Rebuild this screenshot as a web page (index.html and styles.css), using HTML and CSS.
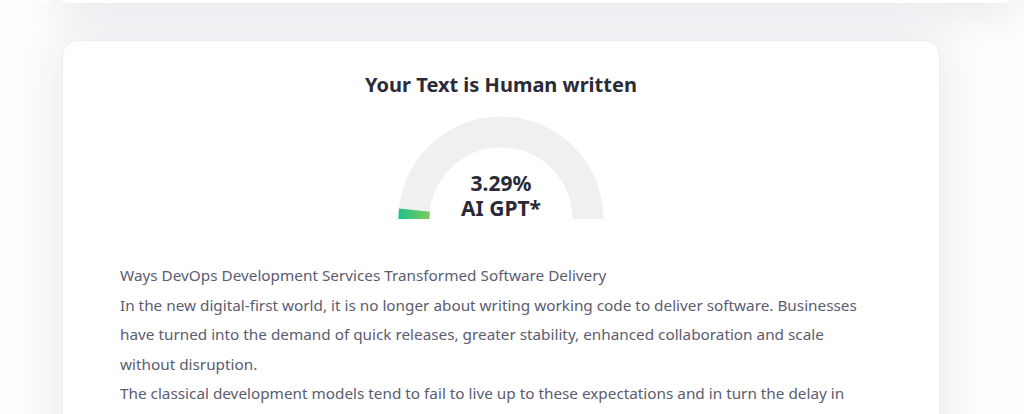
FILE: index.html
```html
<!DOCTYPE html>
<html lang="en">
<head>
<meta charset="utf-8">
<title>AI Detector Result</title>
<link rel="stylesheet" href="styles.css">
</head>
<body>
<div class="page">
  <div class="top-card"><span class="top-dot"></span></div>
  <section class="result-card">
    <h2 class="result-title">Your Text is Human written</h2>
    <div class="gauge">
      <svg class="gauge-svg" width="206" height="104" viewBox="0 0 206 104">
        <defs>
          <linearGradient id="g" gradientUnits="userSpaceOnUse" x1="0" y1="0" x2="32" y2="0">
            <stop offset="0" stop-color="#1fbf8c"/>
            <stop offset="1" stop-color="#7ccb58"/>
          </linearGradient>
        </defs>
        <path d="M 16 103 A 87 87 0 0 1 190 103" fill="none" stroke="#f0f0f0" stroke-width="31"/>
        <path d="M 16 103 A 87 87 0 0 1 16.46 94.06" fill="none" stroke="url(#g)" stroke-width="31"/>
      </svg>
      <div class="gauge-label">
        <span>3.29%</span>
        <span>AI GPT*</span>
      </div>
    </div>
    <div class="result-text">
      <p>Ways DevOps Development Services Transformed Software Delivery<br>In the new digital-first world, it is no longer about writing working code to deliver software. Businesses have turned into the demand of quick releases, greater stability, enhanced collaboration and scale without disruption.<br>The classical development models tend to fail to live up to these expectations and in turn the delay in release cycles, deployment failures and poor communication between teams.</p>
    </div>
  </section>
</div>
</body>
</html>
```

FILE: styles.css
```css
html, body {
  margin: 0;
  padding: 0;
  background: #fdfdfe;
  overflow: hidden;
  font-family: "Noto Sans", "Open Sans", sans-serif;
}
.page {
  position: relative;
  height: 414px;
  overflow: hidden;
}
.top-card {
  position: relative;
  margin: -37px 10px 0 58px;
  height: 40px;
  background: #ffffff;
  border-radius: 0 0 10px 10px;
  box-shadow: 0 10px 40px rgba(40, 40, 80, 0.10);
}
.top-dot {
  position: absolute;
  left: -20px;
  top: 26px;
  width: 14px;
  height: 14px;
  border-radius: 50%;
  background: #ffffff;
}
.result-card {
  margin: 37px 0 0 62px;
  width: 878px;
  height: 420px;
  box-sizing: border-box;
  background: #ffffff;
  border: 1px solid #efeff3;
  border-radius: 16px;
  box-shadow: 0 0 50px rgba(40, 40, 80, 0.10);
  padding: 30px 57px 0 57px;
}
.result-title {
  margin: 0;
  text-align: center;
  font-size: 20px;
  line-height: 28px;
  font-weight: 700;
  color: #2a2a38;
}
.gauge {
  position: relative;
  width: 206px;
  height: 104px;
  margin: 17px auto 0;
}
.gauge-svg {
  display: block;
}
.gauge-label {
  position: absolute;
  left: 0;
  right: 0;
  bottom: -1px;
  display: flex;
  flex-direction: column;
  align-items: center;
  font-size: 21px;
  line-height: 25px;
  font-weight: 700;
  color: #2a2a38;
}
.result-text {
  margin-top: 41px;
  max-width: 750px;
}
.result-text p {
  margin: 0;
  font-size: 15.3px;
  line-height: 29.5px;
  color: #5b5b71;
}
```
